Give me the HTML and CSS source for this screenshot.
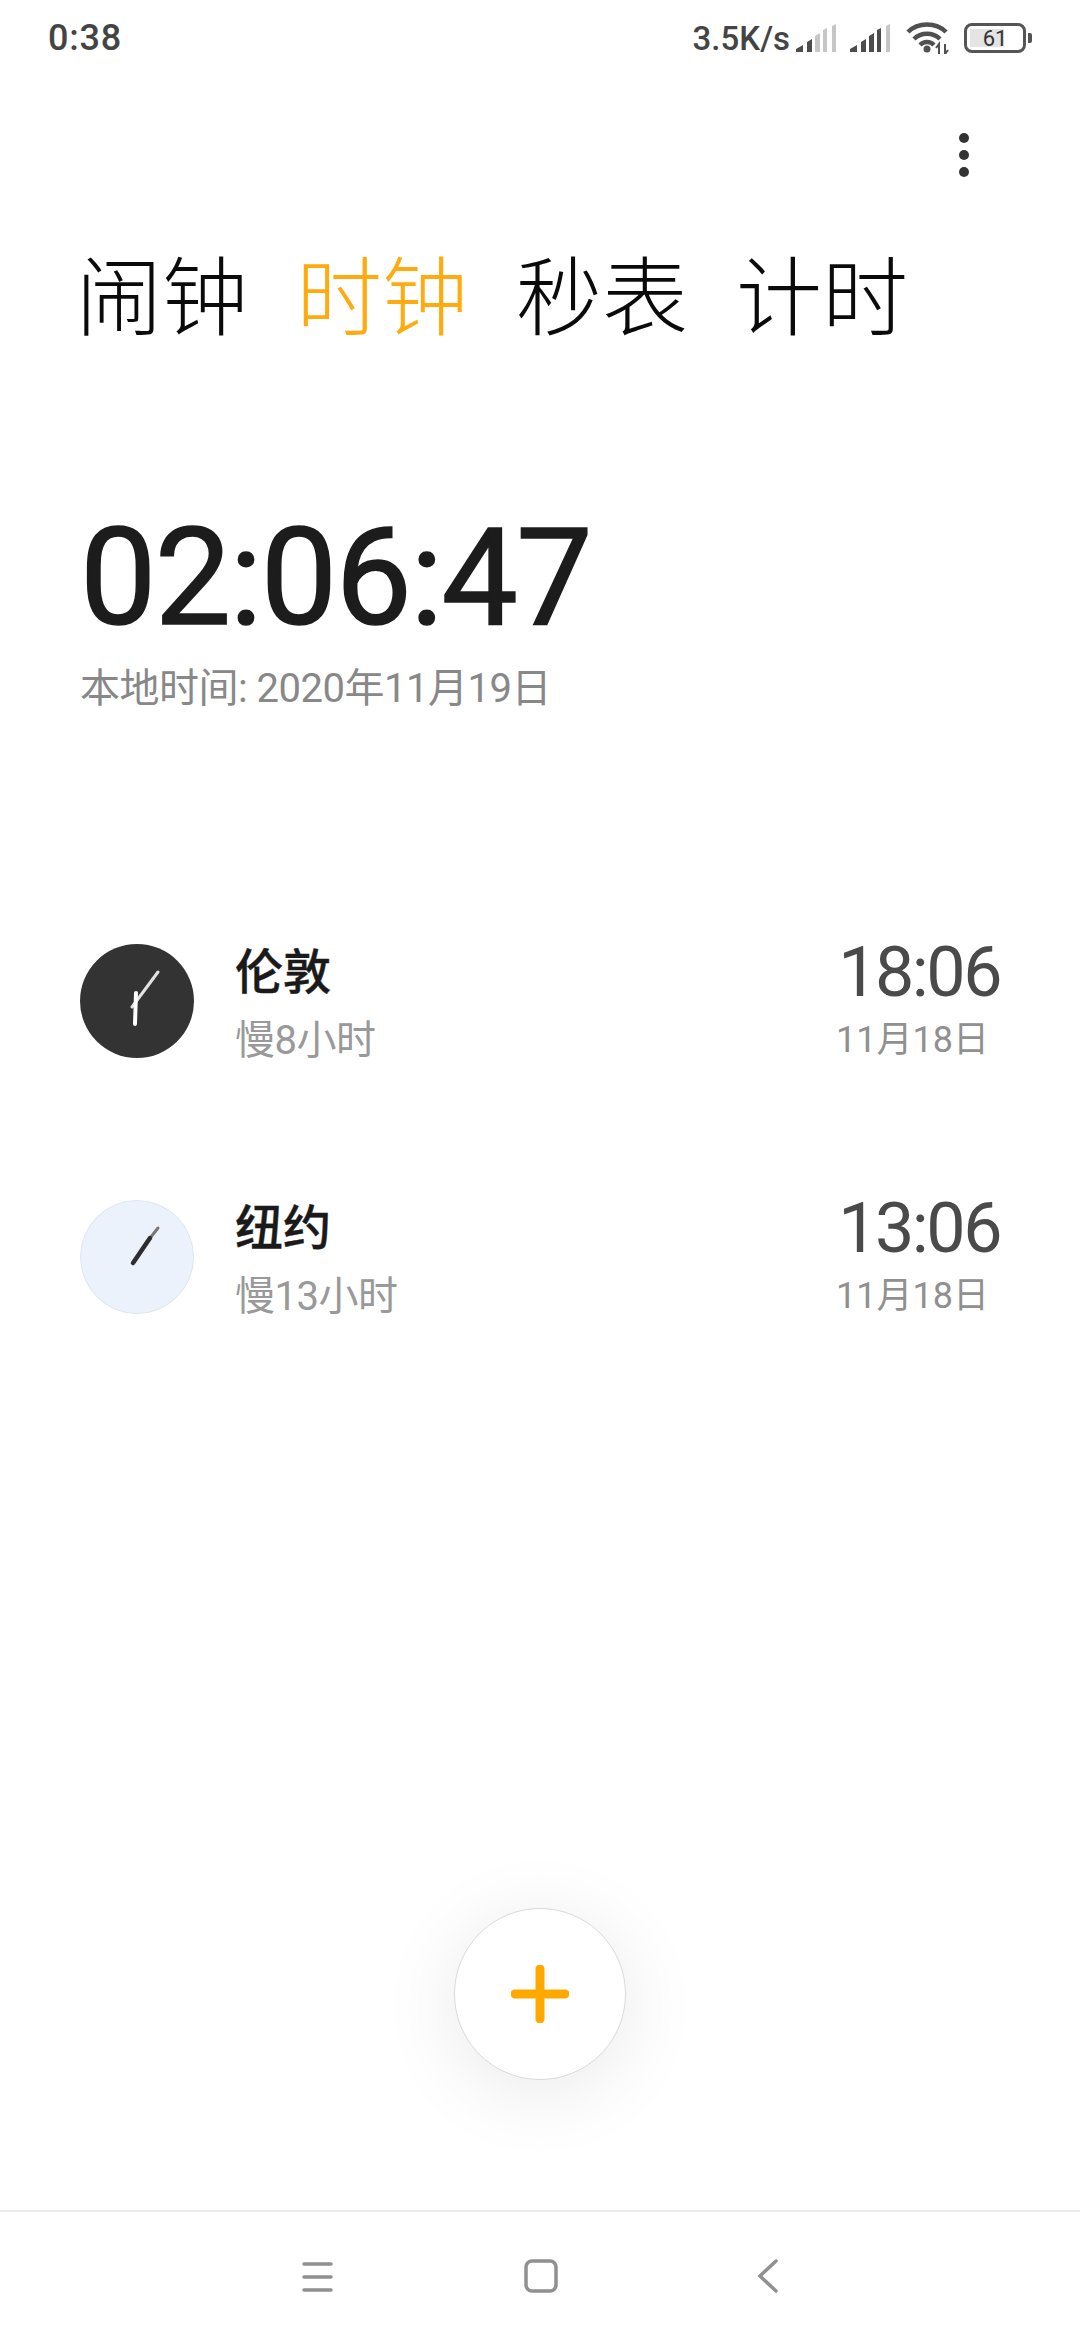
FILE: index.html
```html
<!DOCTYPE html>
<html lang="zh-CN">
<head>
    <meta charset="UTF-8">
    <meta name="viewport" content="width=device-width, initial-scale=1.0">
    <title>时钟</title>
    <link rel="stylesheet" href="styles.css">
</head>
<body>
    <!-- 状态栏 -->
    <header class="status-bar">
        <span class="status-time">0:38</span>
        <div class="status-right">
            <span class="net-speed">3.5K/s</span>
            <svg class="signal" viewBox="0 0 40 28">
                <polygon class="on" points="0,28 0,25 7,21 7,28"/>
                <polygon class="on" points="11,28 11,18 16,15 16,28"/>
                <polygon class="off" points="19,28 19,12 24,9 24,28"/>
                <polygon class="off" points="27,28 27,6 31,4 31,28"/>
                <polygon class="off" points="36,28 36,2 40,0 40,28"/>
            </svg>
            <svg class="signal signal-2" viewBox="0 0 40 28">
                <polygon class="on" points="0,28 0,25 7,21 7,28"/>
                <polygon class="on" points="11,28 11,18 16,15 16,28"/>
                <polygon class="on" points="19,28 19,12 24,9 24,28"/>
                <polygon class="on" points="27,28 27,6 31,4 31,28"/>
                <polygon class="off" points="36,28 36,2 40,0 40,28"/>
            </svg>
            <svg class="wifi" viewBox="0 0 44 32">
                <path d="M2 10 C12 0 30 0 40 10" />
                <path d="M8 17 C15 10 27 10 34 17" />
                <path d="M14 23 C18 19 24 19 28 23" />
                <circle cx="21" cy="27" r="3.5" class="wifi-dot"/>
                <path class="wifi-arrow" d="M33 32 V22 L30 26 M39 22 V32 L42 28"/>
            </svg>
            <div class="battery">
                <div class="battery-body">
                    <div class="battery-level"></div>
                    <span class="battery-num">61</span>
                </div>
                <div class="battery-nub"></div>
            </div>
        </div>
    </header>

    <div class="toolbar">
        <div class="more"><i></i><i></i><i></i></div>
    </div>

    <nav class="tabs">
        <span class="tab">闹钟</span>
        <span class="tab active">时钟</span>
        <span class="tab">秒表</span>
        <span class="tab">计时</span>
    </nav>

    <main class="content">
        <section class="local">
            <div class="local-time">02:06:47</div>
            <div class="local-date">本地时间: 2020年11月19日</div>
        </section>

        <section class="city-list">
            <div class="city">
                <svg class="dial dial-dark" viewBox="0 0 114 114">
                    <circle cx="57" cy="57" r="57" fill="#333333"/>
                    <line x1="52" y1="63" x2="78" y2="28" stroke="#e2e2e2" stroke-width="3" stroke-linecap="round"/>
                    <line x1="56" y1="49" x2="55" y2="80" stroke="#ffffff" stroke-width="4" stroke-linecap="round"/>
                </svg>
                <div class="city-info">
                    <div class="city-name">伦敦</div>
                    <div class="city-diff">慢8小时</div>
                </div>
                <div class="city-clock">
                    <div class="city-time">18:06</div>
                    <div class="city-date">11月18日</div>
                </div>
            </div>
            <div class="city">
                <svg class="dial dial-light" viewBox="0 0 114 114">
                    <circle cx="57" cy="57" r="56.5" fill="#ebf2fb" stroke="#dfe6f0"/>
                    <line x1="67" y1="42" x2="78" y2="28" stroke="#777777" stroke-width="3" stroke-linecap="round"/>
                    <line x1="53" y1="63" x2="70" y2="38" stroke="#2e2e2e" stroke-width="4.5" stroke-linecap="round"/>
                </svg>
                <div class="city-info">
                    <div class="city-name">纽约</div>
                    <div class="city-diff">慢13小时</div>
                </div>
                <div class="city-clock">
                    <div class="city-time">13:06</div>
                    <div class="city-date">11月18日</div>
                </div>
            </div>
        </section>

        <button class="fab" type="button">
            <svg viewBox="0 0 58 58" width="58" height="58">
                <path d="M29 4 V54 M4 29 H54" stroke="#ffa900" stroke-width="9" stroke-linecap="round"/>
            </svg>
        </button>
    </main>

    <!-- 底部导航 -->
    <footer class="nav-bar">
        <svg class="nav-icon" viewBox="0 0 34 34">
            <path d="M4 5 H31 M4 18 H31 M4 31 H31"/>
        </svg>
        <svg class="nav-icon" viewBox="0 0 34 34">
            <rect x="2" y="2" width="30" height="30" rx="6"/>
        </svg>
        <svg class="nav-icon nav-back" viewBox="0 0 34 34">
            <path d="M20 2 L4 17 L20 32"/>
        </svg>
    </footer>
</body>
</html>
```

FILE: styles.css
```css
html, body {
    margin: 0;
    padding: 0;
}
body {
    width: 1080px;
    height: 2340px;
    display: flex;
    flex-direction: column;
    overflow: hidden;
    background-color: #ffffff;
    font-family: Roboto, "Noto Sans CJK SC", sans-serif;
}

/* status bar */
.status-bar {
    height: 76px;
    padding: 0 48px;
    display: flex;
    justify-content: space-between;
    align-items: center;
    color: #444;
}
.status-time {
    font-size: 36px;
    font-weight: 500;
    letter-spacing: 0.8px;
}
.status-right {
    display: flex;
    align-items: center;
}
.net-speed {
    font-size: 33px;
    font-weight: 500;
    margin-right: 6px;
}
.signal {
    width: 40px;
    height: 28px;
    margin-right: 14px;
}
.signal-2 {
    margin-right: 16px;
}
.signal .on {
    fill: #4c4c4c;
}
.signal .off {
    fill: #c6c6c6;
}
.wifi {
    width: 44px;
    height: 32px;
    margin-right: 14px;
}
.wifi path {
    fill: none;
    stroke: #505050;
    stroke-width: 4.5;
}
.wifi .wifi-arrow {
    stroke-width: 2;
}
.wifi-dot {
    fill: #505050;
}
.battery {
    display: flex;
    align-items: center;
    gap: 2px;
}
.battery-body {
    position: relative;
    width: 62px;
    height: 30px;
    box-sizing: border-box;
    border: 3px solid #555;
    border-radius: 8px;
    display: flex;
    justify-content: center;
    align-items: center;
}
.battery-level {
    position: absolute;
    left: 3px;
    top: 3px;
    bottom: 3px;
    width: 61%;
    background-color: #e4e4e4;
}
.battery-num {
    position: relative;
    font-size: 22px;
    color: #333;
}
.battery-nub {
    width: 4px;
    height: 10px;
    border-radius: 0 2px 2px 0;
    background-color: #555;
}

/* action bar */
.toolbar {
    height: 158px;
    padding-right: 111px;
    display: flex;
    justify-content: flex-end;
    align-items: center;
}
.more {
    display: flex;
    flex-direction: column;
    gap: 7px;
}
.more i {
    display: block;
    width: 10px;
    height: 10px;
    border-radius: 50%;
    background-color: #333;
}

/* tabs */
.tabs {
    margin-top: 16px;
    padding-left: 76px;
    display: flex;
    gap: 48px;
}
.tab {
    font-size: 86px;
    font-weight: 300;
    line-height: 100px;
    color: #0a0a0a;
}
.tab.active {
    color: #ffab0f;
}

.content {
    flex: 1;
    position: relative;
}

/* local time */
.local {
    margin-top: 163px;
    padding-left: 80px;
}
.local-time {
    font-size: 136px;
    line-height: 130px;
    letter-spacing: -1.7px;
    -webkit-text-stroke: 1.5px #1c1c1c;
    color: #1c1c1c;
}
.local-date {
    margin-top: 21px;
    font-size: 40px;
    line-height: 50px;
    letter-spacing: -0.5px;
    color: #888;
}

/* city list */
.city-list {
    margin-top: 230px;
    padding: 0 80px;
    display: flex;
    flex-direction: column;
    gap: 142px;
}
.city {
    display: flex;
    align-items: center;
    height: 114px;
}
.dial {
    width: 114px;
    height: 114px;
    flex-shrink: 0;
}
.city-info {
    margin-left: 41px;
    padding-top: 4px;
    flex: 1;
}
.city-name {
    font-size: 48px;
    font-weight: 500;
    line-height: 64px;
    -webkit-text-stroke: 0.4px #1a1a1a;
    color: #1a1a1a;
}
.city-diff {
    margin-top: 11px;
    font-size: 40px;
    line-height: 50px;
    letter-spacing: -0.5px;
    color: #999;
}
.city-clock {
    text-align: right;
}
.city-time {
    font-size: 70px;
    line-height: 70px;
    letter-spacing: -2.5px;
    color: #4a4a4a;
}
.city-date {
    margin-top: 8px;
    margin-right: 11px;
    font-size: 36px;
    line-height: 50px;
    color: #909090;
}

/* add button */
.fab {
    position: absolute;
    left: 454px;
    bottom: 130px;
    width: 172px;
    height: 172px;
    padding: 0;
    border: 1px solid #dadada;
    border-radius: 50%;
    background: #fff;
    box-shadow: 0 12px 80px rgba(0,0,0,0.09);
    display: flex;
    justify-content: center;
    align-items: center;
}

/* nav bar */
.nav-bar {
    height: 130px;
    box-sizing: border-box;
    padding: 0 0 0 10px;
    border-top: 2px solid #ebebeb;
    display: flex;
    justify-content: center;
    align-items: center;
    gap: 190px;
}
.nav-icon {
    width: 34px;
    height: 34px;
    fill: none;
    stroke: #909090;
    stroke-width: 3.5;
    stroke-linecap: round;
}
.nav-back {
    margin-left: 8px;
}
```
